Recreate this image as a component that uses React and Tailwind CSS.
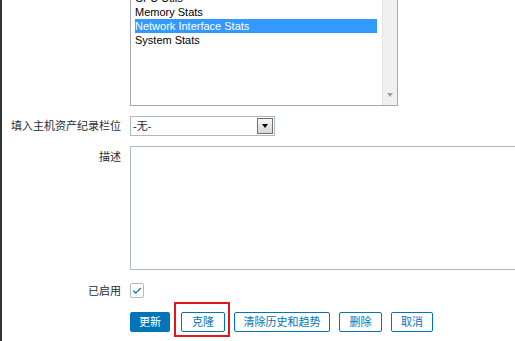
import { Check } from "lucide-react";

const font = "font-['Liberation_Sans','Noto_Sans_CJK_SC',sans-serif]";

const templates = ["CPU Utils", "Memory Stats", "Network Interface Stats", "System Stats"];

function Row({ label, top = false, className = "", children }) {
  return (
    <div className={`flex ${top ? "items-start" : "items-center"} ${className}`}>
      <div
        className={`w-[119px] shrink-0 text-right text-[11px] leading-[14px] text-[#1f2c33] ${top ? "pt-[4px]" : ""}`}
      >
        {label}
      </div>
      <div className="ml-[9px] flex">{children}</div>
    </div>
  );
}

function Button({ children, primary, width }) {
  return (
    <button
      className={`flex h-[20px] items-center justify-center rounded-[2px] border text-[11px] leading-none ${width} ${
        primary
          ? "border-[#0275b8] bg-[#0275b8] text-white"
          : "border-[#0275b8] bg-white text-[#0275b8]"
      }`}
    >
      {children}
    </button>
  );
}

export default function App() {
  return (
    <div className={`relative h-[341px] w-[515px] overflow-hidden border-l-2 border-[#2f3436] bg-white leading-none ${font}`}>
      {/* Template list (scrolled, top cut off) */}
      <div className="flex">
        <div className="w-[119px] shrink-0" />
        <div className="ml-[9px] mt-[-10px] flex h-[116px] w-[268px] border border-[#a9a9a9] bg-white">
          <div className="flex-1 pl-[4px] pr-[5px] pt-0">
            {templates.map((t) => (
              <div
                key={t}
                className={`h-[14px] whitespace-nowrap text-[11px] leading-[14px] ${
                  t === "Network Interface Stats" ? "bg-[#3399ff] text-white" : "text-black"
                }`}
              >
                {t}
              </div>
            ))}
          </div>
          {/* scrollbar */}
          <div className="relative w-[15px] border-l border-[#e4e4e4] bg-[#f0f0f0]">
            <div className="absolute bottom-[8px] left-[4px] h-0 w-0 border-x-[3.5px] border-t-[4px] border-x-transparent border-t-[#a0a0a0]" />
          </div>
        </div>
      </div>

      {/* Inventory field select */}
      <Row label="填入主机资产纪录栏位" className="mt-[10px]">
        <div className="relative flex h-[20px] w-[145px] items-center border border-[#acbbc2] bg-white pl-[2px] text-[11px] text-[#1f2c33]">
          -无-
          <div className="absolute right-[1px] top-[1px] flex h-[16px] w-[16px] items-center justify-center border border-[#707070] bg-gradient-to-b from-[#f6f6f6] to-[#d8d8d8]">
            <div className="h-0 w-0 border-x-[3.5px] border-t-[4px] border-x-transparent border-t-black" />
          </div>
        </div>
      </Row>

      {/* Description */}
      <Row label="描述" top className="mt-[10px]">
        <div className="h-[124px] w-[420px] border border-[#acbbc2] bg-white" />
      </Row>

      {/* Enabled */}
      <Row label="已启用" className="mt-[13px]">
        <div className="flex h-[15px] w-[14px] items-center justify-center rounded-[2px] border border-[#acbbc2] bg-white">
          <Check className="h-[10px] w-[10px] text-[#0275b8]" strokeWidth={3} />
        </div>
      </Row>

      {/* Buttons */}
      <div className="mt-[14px] flex">
        <div className="w-[119px] shrink-0" />
        <div className="ml-[9px] flex items-center">
          <Button primary width="w-[40px]">更新</Button>
          <div className="relative ml-[11px] flex">
            <Button width="w-[44px]">克隆</Button>
            <div className="pointer-events-none absolute bottom-[-5px] left-[-7px] right-[-5px] top-[-10px] border-2 border-[#e3161b]" />
          </div>
          <div className="ml-[9px] flex">
            <Button width="w-[96px]">清除历史和趋势</Button>
          </div>
          <div className="ml-[9px] flex">
            <Button width="w-[43px]">删除</Button>
          </div>
          <div className="ml-[9px] flex">
            <Button width="w-[42px]">取消</Button>
          </div>
        </div>
      </div>
    </div>
  );
}
